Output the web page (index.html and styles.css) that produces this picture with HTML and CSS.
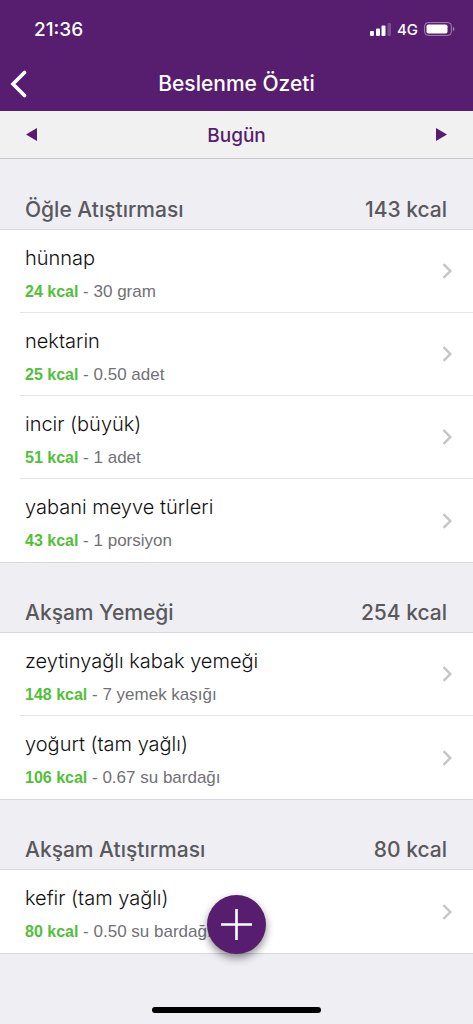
FILE: index.html
```html
<!DOCTYPE html>
<html lang="tr">
<head>
<meta charset="utf-8">
<meta name="viewport" content="width=device-width, initial-scale=1">
<title>Beslenme Özeti</title>
<link rel="stylesheet" href="styles.css">
</head>
<body>
<div class="app">
  <header class="top">
    <div class="status">
      <span class="clock">21:36</span>
      <span class="signals">
        <svg class="bars" width="21" height="13" viewBox="0 0 21 13" fill="#fff" aria-hidden="true">
          <rect x="0" y="8" width="4" height="5" rx="1"/>
          <rect x="6" y="5.5" width="4" height="7.500" rx="1"/>
          <rect x="11.500" y="2.500" width="4" height="10.500" rx="1"/>
          <rect x="17.500" y="0" width="3.500" height="13" rx="1" opacity=".22"/>
        </svg>
        <span class="network">4G</span>
        <svg class="battery" width="31" height="14" viewBox="0 0 31 14" aria-hidden="true">
          <rect x=".6" y=".6" width="26.800" height="12.800" rx="3.600" fill="none" stroke="#fff" stroke-opacity=".45"/>
          <rect x="2.500" y="2.500" width="21" height="9" rx="1.800" fill="#fff"/>
          <path d="M29 4.800c1.800.8 1.800 3.600 0 4.400z" fill="#fff" opacity=".5"/>
        </svg>
      </span>
    </div>
    <div class="nav">
      <button class="back" type="button" aria-label="Geri">
        <svg width="18" height="28" viewBox="0 0 18 28" fill="none" stroke="#fff" stroke-width="3.600" stroke-linecap="round" stroke-linejoin="miter" aria-hidden="true"><path d="M14.500 2.500 3 14l11.500 11.500"/></svg>
      </button>
      <h1 class="title">Beslenme Özeti</h1>
    </div>
  </header>

  <div class="day">
    <button class="step" type="button" aria-label="Önceki gün"><svg width="11" height="13" viewBox="0 0 11 13" fill="#571d6e" aria-hidden="true"><path d="M0 6.500 11 0v13z"/></svg></button>
    <span class="today">Bugün</span>
    <button class="step" type="button" aria-label="Sonraki gün"><svg width="11" height="13" viewBox="0 0 11 13" fill="#571d6e" aria-hidden="true"><path d="M11 6.500 0 0v13z"/></svg></button>
  </div>

  <main class="meals">
    <section>
      <h2 class="meal"><span>Öğle Atıştırması</span><span>143 kcal</span></h2>
      <ul class="foods">
        <li><a class="food" href="#"><span class="info"><span class="name">hünnap</span><span class="detail"><b class="kcal">24 kcal</b> - 30 gram</span></span><svg class="chevron" viewBox="0 0 10 16"><path d="M1.500 1.200 8.300 8l-6.800 6.800"/></svg></a></li>
        <li><a class="food" href="#"><span class="info"><span class="name">nektarin</span><span class="detail"><b class="kcal">25 kcal</b> - 0.50 adet</span></span><svg class="chevron" viewBox="0 0 10 16"><path d="M1.500 1.200 8.300 8l-6.800 6.800"/></svg></a></li>
        <li><a class="food" href="#"><span class="info"><span class="name">incir (büyük)</span><span class="detail"><b class="kcal">51 kcal</b> - 1 adet</span></span><svg class="chevron" viewBox="0 0 10 16"><path d="M1.500 1.200 8.300 8l-6.800 6.800"/></svg></a></li>
        <li><a class="food" href="#"><span class="info"><span class="name">yabani meyve türleri</span><span class="detail"><b class="kcal">43 kcal</b> - 1 porsiyon</span></span><svg class="chevron" viewBox="0 0 10 16"><path d="M1.500 1.200 8.300 8l-6.800 6.800"/></svg></a></li>
      </ul>
    </section>
    <section>
      <h2 class="meal"><span>Akşam Yemeği</span><span>254 kcal</span></h2>
      <ul class="foods">
        <li><a class="food" href="#"><span class="info"><span class="name">zeytinyağlı kabak yemeği</span><span class="detail"><b class="kcal">148 kcal</b> - 7 yemek kaşığı</span></span><svg class="chevron" viewBox="0 0 10 16"><path d="M1.500 1.200 8.300 8l-6.800 6.800"/></svg></a></li>
        <li><a class="food" href="#"><span class="info"><span class="name">yoğurt (tam yağlı)</span><span class="detail"><b class="kcal">106 kcal</b> - 0.67 su bardağı</span></span><svg class="chevron" viewBox="0 0 10 16"><path d="M1.500 1.200 8.300 8l-6.800 6.800"/></svg></a></li>
      </ul>
    </section>
    <section>
      <h2 class="meal"><span>Akşam Atıştırması</span><span>80 kcal</span></h2>
      <ul class="foods">
        <li><a class="food" href="#"><span class="info"><span class="name">kefir (tam yağlı)</span><span class="detail"><b class="kcal">80 kcal</b> - 0.50 su bardağı</span></span><svg class="chevron" viewBox="0 0 10 16"><path d="M1.500 1.200 8.300 8l-6.800 6.800"/></svg></a></li>
      </ul>
    </section>
  </main>

  <button class="add" type="button" aria-label="Ekle">
    <svg width="31" height="31" viewBox="0 0 31 31" stroke="#fff" stroke-width="2.600" aria-hidden="true"><path d="M15.500 0v31M0 15.500h31"/></svg>
  </button>
  <div class="home"></div>
</div>
</body>
</html>
```

FILE: styles.css
```css
* { box-sizing: border-box; }

body {
  margin: 0;
  background: #efeef3;
  font-family: "Liberation Sans", Arial, sans-serif;
  color: #111;
}

button {
  display: flex;
  align-items: center;
  justify-content: center;
  padding: 0;
  border: 0;
  background: none;
}

svg { display: block; flex: none; }

.app {
  position: relative;
  display: flex;
  flex-direction: column;
  min-height: 100vh;
}

.top {
  background: #571d6e;
  color: #fff;
  font-family: Inter, sans-serif;
}

.status {
  display: flex;
  align-items: center;
  justify-content: space-between;
  height: 56px;
  padding: 2px 18px 0 34px;
}

.clock { font-size: 19px; font-weight: 500; }

.signals { display: flex; align-items: center; gap: 6px; }

.network { font-size: 15px; font-weight: 500; }

.nav {
  display: grid;
  grid-template-columns: 44px 1fr 44px;
  align-items: center;
  height: 55px;
}

.back {
  justify-content: flex-start;
  height: 44px;
  padding-left: 10px;
}

.title {
  margin: 0;
  font-size: 21px;
  font-weight: 500;
  text-align: center;
}

.day {
  display: flex;
  align-items: center;
  justify-content: space-between;
  height: 48px;
  padding: 0 16px;
  border-bottom: 1px solid #c6c5c9;
  background: #f1f1f1;
}

.step { width: 31px; height: 44px; }

.today {
  padding-top: 2px;
  color: #571d6e;
  font-family: Inter, sans-serif;
  font-size: 19px;
  font-weight: 500;
}

.meals { flex: 1; }

.meal {
  display: flex;
  align-items: flex-end;
  justify-content: space-between;
  height: 70px;
  margin: 0;
  padding: 0 26px 7px 25px;
  color: #59595d;
  font-family: Inter, sans-serif;
  font-size: 21px;
  font-weight: 500;
  line-height: 24px;
}

section + section .meal { border-top: 1px solid #d8d7dc; }

.foods {
  margin: 0;
  padding: 0;
  list-style: none;
  border-top: 1px solid #d8d7dc;
  background: #fff;
}

section:last-child .foods { border-bottom: 1px solid #d8d7dc; }

.foods li { padding-left: 20px; }

.food {
  display: flex;
  align-items: center;
  justify-content: space-between;
  height: 83px;
  padding: 0 21px 0 5px;
  color: inherit;
  text-decoration: none;
}

.foods li:not(:last-child) .food { border-bottom: 1px solid #e4e4e6; }

.info {
  display: flex;
  flex-direction: column;
  gap: 10px;
  padding-top: 5px;
}

.name {
  font-family: Inter, sans-serif;
  font-size: 20px;
  font-weight: 300;
  line-height: 26px;
}

.detail { color: #717175; font-size: 17px; line-height: 22px; }

.kcal {
  color: #52bf39;
  font-size: 16px;
  font-weight: 700;
}

.chevron {
  width: 10px;
  height: 16px;
  fill: none;
  stroke: #c5c5c9;
  stroke-width: 2.4;
}

.add {
  position: absolute;
  bottom: 70px;
  left: calc(50% - 30px);
  width: 59px;
  height: 59px;
  border-radius: 50%;
  background: #571d6e;
  box-shadow: 0 4px 8px rgba(0, 0, 0, .45);
}

.home {
  align-self: center;
  width: 169px;
  height: 6px;
  margin-bottom: 11px;
  border-radius: 3px;
  background: #000;
}
```
